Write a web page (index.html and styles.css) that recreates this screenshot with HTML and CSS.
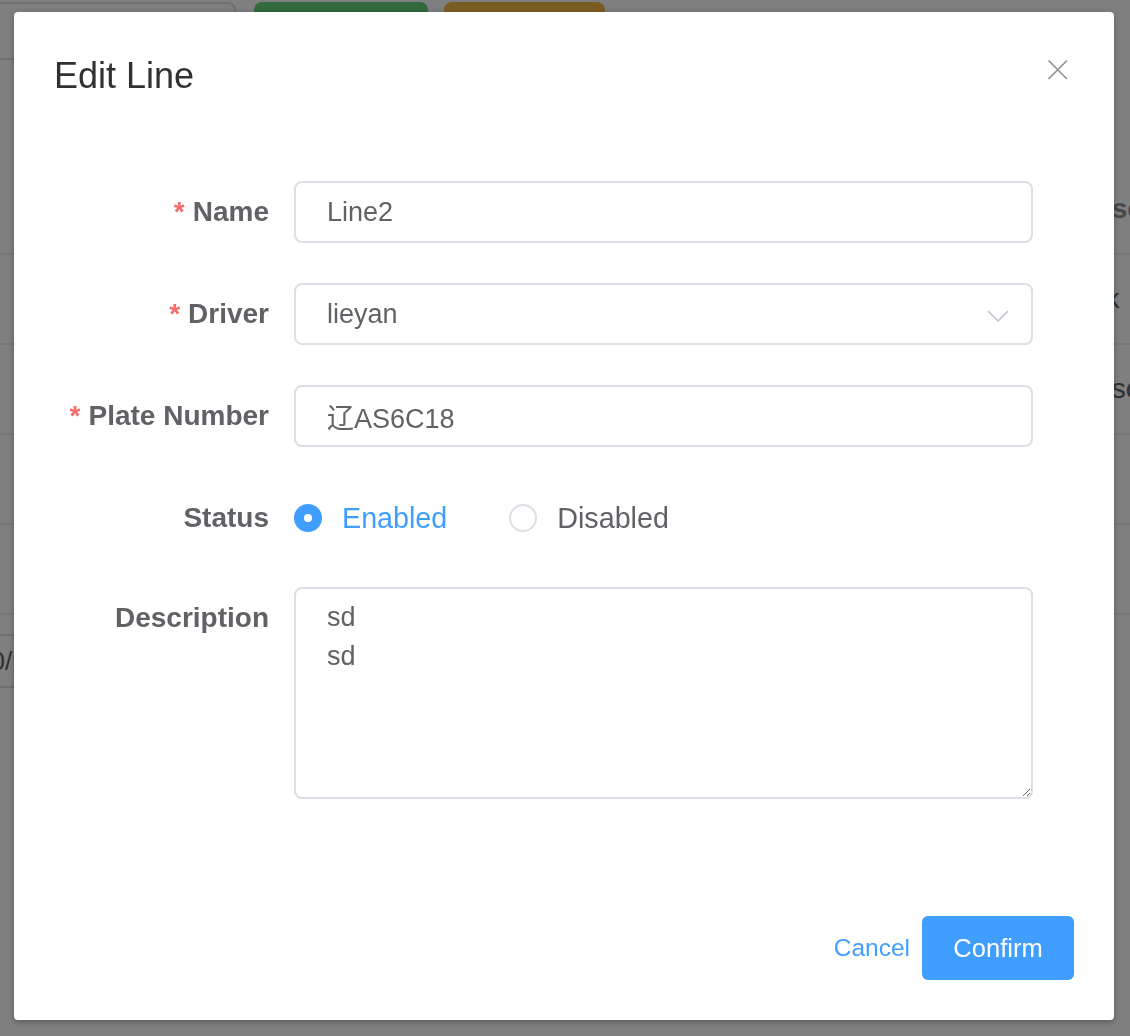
FILE: index.html
```html
<!DOCTYPE html>
<html lang="en">
<head>
<meta charset="utf-8">
<title>Edit Line</title>
<link rel="stylesheet" href="styles.css">
</head>
<body>
<div class="page">
  <div class="toolbar">
    <div class="bg-btn bg-btn-white"></div>
    <div class="bg-btn bg-btn-green"></div>
    <div class="bg-btn bg-btn-orange"></div>
  </div>
  <div class="table">
    <div class="trow thead"><span class="cell">Description</span></div>
    <div class="trow"><span class="cell">ask</span></div>
    <div class="trow"><span class="cell">Description</span></div>
    <div class="trow"><span class="cell"></span></div>
    <div class="trow"><span class="cell"></span></div>
  </div>
  <div class="pager"><div class="pager-size">10/page</div></div>
</div>

<div class="overlay">
  <div class="dialog" role="dialog" aria-label="Edit Line">
    <div class="dialog-header">
      <span class="dialog-title">Edit Line</span>
      <button class="dialog-close" aria-label="Close">
        <svg width="32" height="32" viewBox="0 0 32 32"><path d="M6.5 8.5 L25 27 M25 8.5 L6.5 27" stroke="#909399" stroke-width="1.7" fill="none"/></svg>
      </button>
    </div>
    <div class="dialog-body">
      <form class="form">
        <div class="form-item">
          <label class="form-label required">Name</label>
          <div class="form-content">
            <input class="input" type="text" value="Line2">
          </div>
        </div>
        <div class="form-item">
          <label class="form-label required">Driver</label>
          <div class="form-content">
            <div class="select">
              <input class="input" type="text" value="lieyan" readonly>
              <svg class="select-arrow" width="22" height="12" viewBox="0 0 22 12"><path d="M1 1 L11 11 L21 1" stroke="#c0c4cc" stroke-width="1.6" fill="none"/></svg>
            </div>
          </div>
        </div>
        <div class="form-item">
          <label class="form-label required">Plate Number</label>
          <div class="form-content">
            <input class="input" type="text" value="辽AS6C18">
          </div>
        </div>
        <div class="form-item form-item-radio">
          <label class="form-label">Status</label>
          <div class="form-content radios">
            <label class="radio checked"><span class="radio-dot"></span><span class="radio-text">Enabled</span></label>
            <label class="radio"><span class="radio-dot"></span><span class="radio-text">Disabled</span></label>
          </div>
        </div>
        <div class="form-item">
          <label class="form-label">Description</label>
          <div class="form-content">
            <textarea class="textarea">sd
sd</textarea>
          </div>
        </div>
      </form>
    </div>
    <div class="dialog-footer">
      <button class="btn-text">Cancel</button>
      <button class="btn-primary">Confirm</button>
    </div>
  </div>
</div>
</body>
</html>
```
FILE: styles.css
```css
html, body {
  margin: 0;
  padding: 0;
  overflow: hidden;
  width: 1130px;
  height: 1036px;
  background: #ffffff;
  font-family: "Liberation Sans", Arial, "Noto Sans CJK SC", sans-serif;
}

/* background page (behind the mask) */
.page {
  padding-top: 2px;
}
.toolbar {
  display: flex;
  margin-left: -12px;
}
.bg-btn {
  height: 58px;
  border-radius: 8px;
  box-sizing: border-box;
}
.bg-btn-white {
  width: 248px;
  border: 2px solid #dcdfe6;
  background: #fff;
}
.bg-btn-green {
  width: 174px;
  margin-left: 18px;
  background: #64d27c;
}
.bg-btn-orange {
  width: 161px;
  margin-left: 16px;
  background: #f3b944;
}
.table {
  margin-top: 105px;
  margin-left: -20px;
  width: 1220px;
}
.trow {
  height: 88px;
  border-bottom: 2px solid #ebeef5;
  display: flex;
  align-items: center;
  font-size: 28px;
  color: #606266;
}
.thead {
  color: #909399;
  font-weight: bold;
}
.cell {
  padding-left: 1096px;
  white-space: nowrap;
}
.pager {
  margin-top: 19px;
}
.pager-size {
  margin-left: -50px;
  width: 200px;
  height: 54px;
  box-sizing: border-box;
  border: 2px solid #dcdfe6;
  border-radius: 6px;
  padding-left: 24px;
  line-height: 50px;
  font-size: 26px;
  color: #606266;
}

/* mask + dialog */
.overlay {
  position: fixed;
  inset: 0;
  background: rgba(0, 0, 0, 0.5);
}
.dialog {
  position: relative;
  margin: 12px 0 0 14px;
  width: 1100px;
  background: #fff;
  border-radius: 4px;
  box-shadow: 0 2px 6px rgba(0, 0, 0, 0.3);
}
.dialog-header {
  padding: 40px 40px 20px;
}
.dialog-title {
  display: block;
  font-size: 36px;
  line-height: 48px;
  color: #303133;
}
.dialog-close {
  position: absolute;
  top: 40px;
  right: 40px;
  width: 32px;
  height: 32px;
  padding: 0;
  border: 0;
  background: none;
}
.dialog-close svg {
  display: block;
}
.dialog-body {
  padding: 61px 40px 57px;
}
.form-item {
  display: flex;
  margin-bottom: 40px;
}
.form-item-radio {
  margin-bottom: 38px;
}
.form-label {
  width: 240px;
  box-sizing: border-box;
  padding-right: 25px;
  text-align: right;
  font-size: 28px;
  font-weight: bold;
  line-height: 62px;
  color: #606266;
  flex: none;
}
.form-label.required::before {
  content: "*";
  color: #f56c6c;
  margin-right: 8px;
}
.form-content {
  width: 739px;
}
.input {
  display: block;
  width: 739px;
  height: 62px;
  box-sizing: border-box;
  border: 2px solid #dcdfe6;
  border-radius: 8px;
  padding: 0 31px;
  font-family: inherit;
  font-size: 27px;
  color: #606266;
  background: #fff;
  outline: none;
}
.select {
  position: relative;
}
.select .input {
  padding-right: 70px;
}
.select-arrow {
  position: absolute;
  right: 24px;
  top: 27px;
}
.radios {
  display: flex;
  align-items: center;
  height: 62px;
}
.radio {
  display: flex;
  align-items: center;
  margin-right: 62px;
  font-size: 28.7px;
  color: #606266;
}
.radio-dot {
  width: 28px;
  height: 28px;
  box-sizing: border-box;
  border: 2px solid #dcdfe6;
  border-radius: 50%;
  background: #fff;
  margin-right: 20px;
  position: relative;
}
.radio.checked .radio-dot {
  background: #409eff;
  border-color: #409eff;
}
.radio.checked .radio-dot::after {
  content: "";
  position: absolute;
  width: 8px;
  height: 8px;
  border-radius: 50%;
  background: #fff;
  left: 8px;
  top: 8px;
}
.radio.checked .radio-text {
  color: #409eff;
}
.textarea {
  display: block;
  width: 739px;
  height: 212px;
  box-sizing: border-box;
  border: 2px solid #dcdfe6;
  border-radius: 8px;
  padding: 9px 31px;
  font-family: inherit;
  font-size: 27px;
  line-height: 39px;
  color: #606266;
  resize: vertical;
  outline: none;
}
.dialog-footer {
  display: flex;
  justify-content: flex-end;
  align-items: center;
  padding: 20px 40px 40px;
}
.btn-text {
  border: 0;
  background: none;
  padding: 0;
  margin-right: 12px;
  font-family: inherit;
  font-size: 24.5px;
  color: #409eff;
}
.btn-primary {
  width: 152px;
  height: 64px;
  border: 0;
  border-radius: 6px;
  background: #409eff;
  color: #fff;
  font-family: inherit;
  font-size: 25.5px;
  padding: 0;
}
```
